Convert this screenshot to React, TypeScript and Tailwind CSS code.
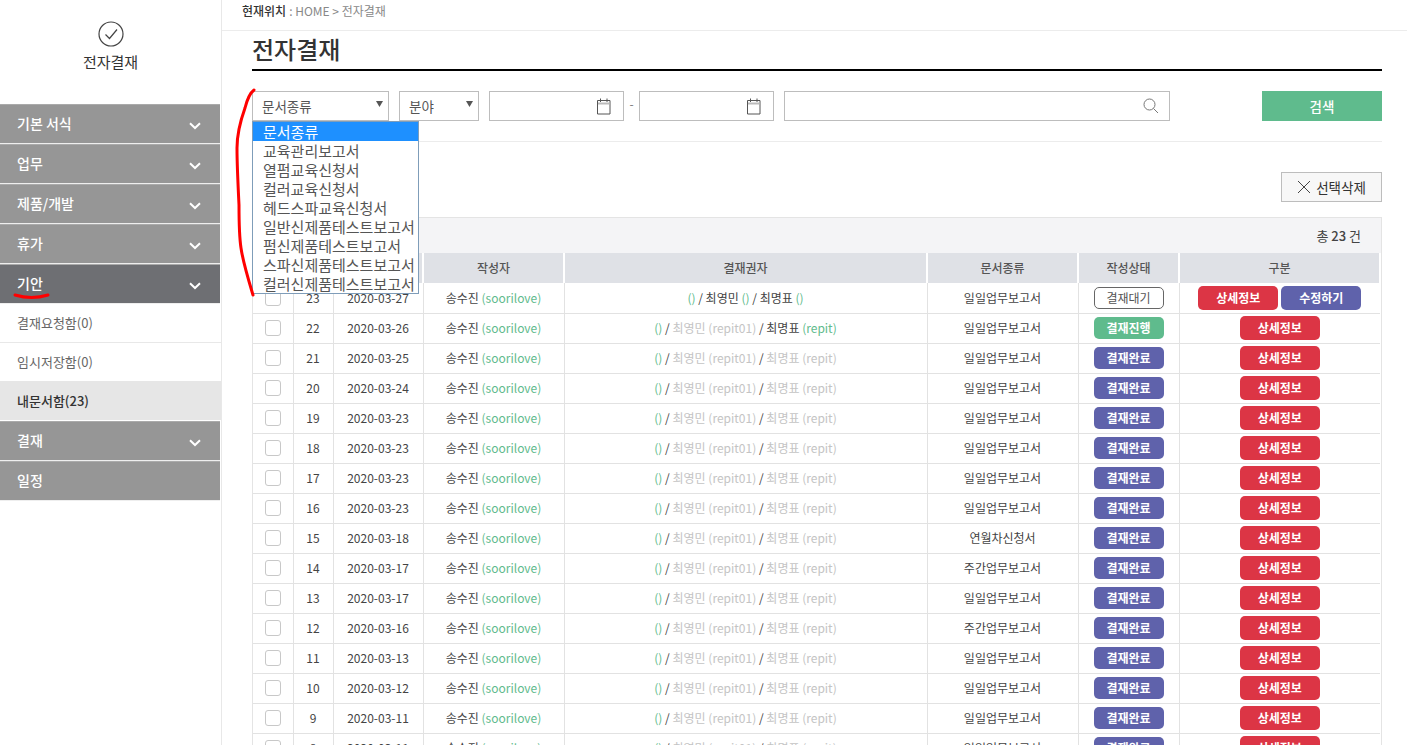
import React from "react";

const font = { fontFamily: '"Noto Sans CJK KR", "Noto Sans", sans-serif' };

const Chevron = () => (
  <svg width="12" height="8" viewBox="0 0 12 8" fill="none" stroke="white" strokeWidth="2">
    <path d="M1 1.2 L6 6 L11 1.2" />
  </svg>
);

const Caret = () => (
  <svg width="7" height="6" viewBox="0 0 7 6" fill="#555">
    <path d="M0 0 H7 L3.5 6 Z" />
  </svg>
);

const Calendar = () => (
  <svg width="15" height="18" viewBox="0 0 15 18" fill="none" stroke="#555" strokeWidth="1">
    <path d="M1.5 3.5 H14 V17 H1.5 Z" />
    <path d="M4.5 1.5 V5 M11 1.5 V5" />
    <path d="M2 6.5 H13.5" stroke="#bbb" strokeWidth="2" />
  </svg>
);

function MenuItem({ label, active, chevron = true }: { label: string; active?: boolean; chevron?: boolean }) {
  return (
    <div
      className={`flex h-[40px] w-[220px] items-center justify-between border-t border-b border-t-[#aaaaaa] border-b-[#eeeeee] pl-[17px] pr-[19px] text-[14px] font-medium text-white ${
        active ? "bg-[#6e6f73]" : "bg-[#969696]"
      }`}
    >
      <span className="relative top-[-1px]">{label}</span>
      {chevron && (
        <span className="relative top-[2px]">
          <Chevron />
        </span>
      )}
    </div>
  );
}

function SubItem({ label, active }: { label: string; active?: boolean }) {
  return (
    <div
      className={`flex h-[39px] items-center pl-[17px] text-[13px] ${
        active ? "bg-[#e6e6e6] font-medium text-[#333333]" : "border-b border-[#e8e8e8] bg-white text-[#666666]"
      }`}
    >
      {label}
    </div>
  );
}

type Row = { n: number; date: string; doc?: string };

const rows: Row[] = [
  { n: 23, date: "2020-03-27" },
  { n: 22, date: "2020-03-26" },
  { n: 21, date: "2020-03-25" },
  { n: 20, date: "2020-03-24" },
  { n: 19, date: "2020-03-23" },
  { n: 18, date: "2020-03-23" },
  { n: 17, date: "2020-03-23" },
  { n: 16, date: "2020-03-23" },
  { n: 15, date: "2020-03-18", doc: "연월차신청서" },
  { n: 14, date: "2020-03-17", doc: "주간업무보고서" },
  { n: 13, date: "2020-03-17" },
  { n: 12, date: "2020-03-16", doc: "주간업무보고서" },
  { n: 11, date: "2020-03-13" },
  { n: 10, date: "2020-03-12" },
  { n: 9, date: "2020-03-11" },
  { n: 8, date: "2020-03-11" },
];

const options = [
  "문서종류",
  "교육관리보고서",
  "열펌교육신청서",
  "컬러교육신청서",
  "헤드스파교육신청서",
  "일반신제품테스트보고서",
  "펌신제품테스트보고서",
  "스파신제품테스트보고서",
  "컬러신제품테스트보고서",
];

function Approvers({ n }: { n: number }) {
  const green = "text-[#5fbb8d]";
  const gray = "text-[#c4c4c4]";
  const dark = "text-[#444444]";
  if (n === 23) {
    return (
      <>
        <span className={green}>()</span> <span className={dark}>/ 최영민</span> <span className={green}>()</span>{" "}
        <span className={dark}>/ 최명표</span> <span className={green}>()</span>
      </>
    );
  }
  return (
    <>
      <span className={green}>()</span> <span className={dark}>/</span> <span className={gray}>최영민 (repit01)</span>{" "}
      <span className={dark}>/</span>{" "}
      {n === 22 ? (
        <>
          <span className={dark}>최명표</span> <span className={green}>(repit)</span>
        </>
      ) : (
        <span className={gray}>최명표 (repit)</span>
      )}
    </>
  );
}

function Status({ n }: { n: number }) {
  if (n === 23)
    return (
      <span className="mx-auto flex h-[22px] w-[70px] items-center justify-center rounded-[5px] border border-[#666666] bg-white text-[12px] text-[#555555]">
        결재대기
      </span>
    );
  return (
    <span
      className={`mx-auto flex h-[22px] w-[70px] items-center justify-center rounded-[5px] text-[12px] font-bold text-white ${
        n === 22 ? "bg-[#5fbb8d]" : "bg-[#5f62ab]"
      }`}
    >
      {n === 22 ? "결재진행" : "결재완료"}
    </span>
  );
}

const Btn = ({ color, children }: { color: string; children: React.ReactNode }) => (
  <span className={`flex h-[24px] w-[80px] items-center justify-center rounded-[5px] text-[12px] font-bold text-white ${color}`}>
    {children}
  </span>
);

export default function App() {
  return (
    <div className="relative flex h-[745px] w-[1407px] overflow-hidden bg-white text-[12px] text-[#444444]" style={font}>
      {/* sidebar */}
      <aside className="h-full w-[222px] shrink-0 border-r border-[#e8e8e8]">
        <div className="flex h-[104px] flex-col items-center pt-[21px]">
          <svg width="26" height="26" viewBox="0 0 26 26" fill="none" stroke="#444" strokeWidth="1.2">
            <circle cx="13" cy="13" r="12" />
            <path d="M7.5 13.5 L11.5 17.5 L19 8.5" />
          </svg>
          <div className="mt-[4px] text-[15px] text-[#333333]">전자결재</div>
        </div>
        <MenuItem label="기본 서식" />
        <MenuItem label="업무" />
        <MenuItem label="제품/개발" />
        <MenuItem label="휴가" />
        <MenuItem label="기안" active />
        <SubItem label="결재요청함(0)" />
        <SubItem label="임시저장함(0)" />
        <div className="mt-[-1px]">
          <SubItem label="내문서함(23)" active />
        </div>
        <div className="mt-[1px]">
          <MenuItem label="결재" />
        </div>
        <MenuItem label="일정" chevron={false} />
      </aside>

      {/* main */}
      <main className="min-w-0 flex-1">
        <div className="flex h-[31px] items-start border-b border-[#ececec] pl-[20px] pt-[2px] text-[12px] text-[#888888]">
          <span className="font-medium text-[#333333]">현재위치</span>
          <span className="ml-[3px]">: HOME &gt; 전자결재</span>
        </div>

        <div className="ml-[30px] mr-[25px]">
          <h1 className="flex h-[40px] items-end border-b-2 border-black pb-[-2px] text-[24px] font-medium leading-[40px] text-[#333333]">
            전자결재
          </h1>

          {/* filters */}
          <div className="mt-[20px] flex h-[30px] items-stretch">
            <div className="flex w-[137px] items-center justify-between border border-[#bdbdbd] pl-[9px] pr-[5px] text-[13.5px] text-[#555555]">
              문서종류
              <span className="relative top-[-2px]">
                <Caret />
              </span>
            </div>
            <div className="ml-[10px] flex w-[80px] items-center justify-between border border-[#bdbdbd] pl-[9px] pr-[5px] text-[13.5px] text-[#555555]">
              분야
              <span className="relative top-[-2px]">
                <Caret />
              </span>
            </div>
            <div className="ml-[10px] flex w-[135px] items-center justify-end border border-[#bdbdbd] pr-[12px]">
              <Calendar />
            </div>
            <div className="flex w-[15px] items-center justify-center pb-[4px] text-[12px] text-[#777777]">-</div>
            <div className="flex w-[135px] items-center justify-end border border-[#bdbdbd] pr-[12px]">
              <Calendar />
            </div>
            <div className="ml-[10px] flex w-[386px] items-center justify-end border border-[#bdbdbd] pr-[10px]">
              <svg width="16" height="16" viewBox="0 0 16 16" fill="none" stroke="#777" strokeWidth="1">
                <circle cx="6.5" cy="6.5" r="5.5" />
                <path d="M10.5 10.5 L15 15" />
              </svg>
            </div>
            <div className="ml-[92px] flex w-[120px] items-center justify-center bg-[#5fbb8d] text-[13.5px] font-medium text-white">
              검색
            </div>
          </div>

          <div className="mt-[20px] border-t border-[#ececec]" />

          {/* delete */}
          <div className="mt-[30px] flex justify-end">
            <div className="flex h-[30px] w-[101px] items-center justify-center gap-[5px] border border-[#bdbdbd] bg-[#f7f7f7] text-[13.5px] text-[#333333]">
              <svg width="14" height="14" viewBox="0 0 14 14" fill="none" stroke="#444" strokeWidth="1">
                <path d="M1 1 L13 13 M13 1 L1 13" />
              </svg>
              선택삭제
            </div>
          </div>

          {/* table */}
          <div className="mt-[15px] border border-[#e4e4e4] bg-[#f4f4f6]">
            <div className="flex h-[35px] items-center justify-end pr-[20px] text-[13px] text-[#444444]">
              총&nbsp;<span className="font-medium">23</span>&nbsp;건
            </div>
            <table className="w-full table-fixed border-collapse bg-white text-center">
              <colgroup>
                <col className="w-[40px]" />
                <col className="w-[40px]" />
                <col className="w-[90px]" />
                <col className="w-[141px]" />
                <col className="w-[363px]" />
                <col className="w-[151px]" />
                <col className="w-[101px]" />
                <col />
              </colgroup>
              <thead>
                <tr className="h-[30px] bg-[#dfe1e6] text-[12px] font-medium text-[#555555]">
                  {["", "", "", "작성자", "결재권자", "문서종류", "작성상태", "구분"].map((h, i) => (
                    <th key={i} className="border-r-2 border-white font-medium last:border-r-[2px]">
                      {h}
                    </th>
                  ))}
                </tr>
              </thead>
              <tbody>
                {rows.map((r) => (
                  <tr key={r.n} className="h-[30px] border-b border-[#e2e2e2] text-[12px]">
                    <td className="border-r border-[#e2e2e2] p-0">
                      <span className="mx-auto block h-[16px] w-[16px] rounded-[3px] border border-[#c8c8c8] bg-white" />
                    </td>
                    <td className="border-r border-[#e2e2e2] p-0">{r.n}</td>
                    <td className="border-r border-[#e2e2e2] p-0">{r.date}</td>
                    <td className="border-r border-[#e2e2e2] p-0">
                      송수진 <span className="text-[#5fbb8d]">(soorilove)</span>
                    </td>
                    <td className="border-r border-[#e2e2e2] p-0">
                      <Approvers n={r.n} />
                    </td>
                    <td className="border-r border-[#e2e2e2] p-0">{r.doc ?? "일일업무보고서"}</td>
                    <td className="border-r border-[#e2e2e2] p-0">
                      <Status n={r.n} />
                    </td>
                    <td className="p-0">
                      <div className="flex justify-center gap-[3px]">
                        <Btn color="bg-[#dc3545]">상세정보</Btn>
                        {r.n === 23 && <Btn color="bg-[#5f62ab]">수정하기</Btn>}
                      </div>
                    </td>
                  </tr>
                ))}
              </tbody>
            </table>
          </div>
        </div>
      </main>

      {/* open select list */}
      <div className="absolute left-[252px] top-[121px] w-[167px] border border-[#7f9db9] bg-white text-[15px] leading-[19px] text-[#555555]">
        {options.map((o, i) => (
          <div key={o} className={`h-[19px] whitespace-nowrap pl-[10px] ${i === 0 ? "bg-[#1e90ff] text-white" : ""}`}>
            {o}
          </div>
        ))}
      </div>

      {/* hand-drawn red marks */}
      <svg className="pointer-events-none absolute left-0 top-0" width="300" height="310" fill="none" stroke="#ff0000" strokeWidth="3" strokeLinecap="round">
        <path d="M254 90 C250 93 247 100 245 108 C240 122 237 135 237 148 C237 165 238 185 239 205 C239 222 239 235 241 248 C243 262 247 275 253 295" />
        <path d="M15 295 C25 298 38 298 48 295" />
      </svg>
    </div>
  );
}
